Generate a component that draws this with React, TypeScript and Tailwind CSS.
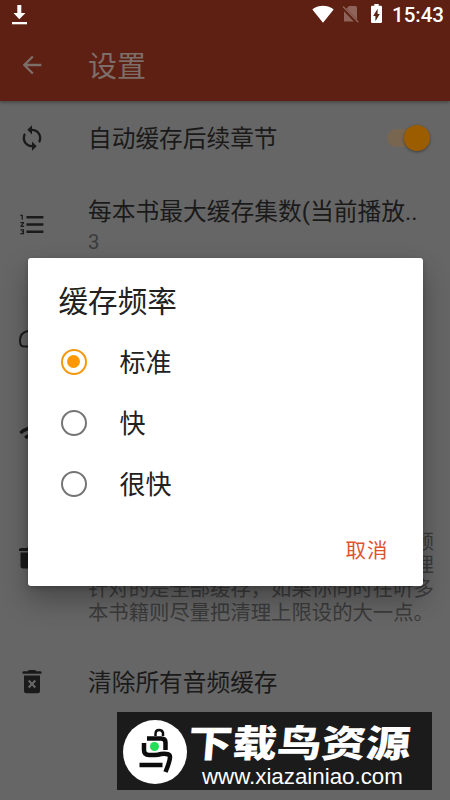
import type { ReactNode } from "react";
import { MdArrowBack, MdBatteryChargingFull, MdFormatListNumbered, MdSignalWifi4Bar, MdSync, MdWifi } from "react-icons/md";

const OPTIONS = [
  { id: "normal", label: "标准" },
  { id: "fast", label: "快" },
  { id: "faster", label: "很快" },
];

function StatusBar() {
  return (
    <div className="h-7 relative text-white">
      <svg className="absolute left-[11px] top-1" width="17" height="21" viewBox="0 0 17 21" fill="currentColor">
        <path d="M6.3 1h4v8h4.2l-6.2 6.3L2.5 9h3.8z" />
        <path d="M1 18h15v2.3H1z" />
      </svg>
      <MdSignalWifi4Bar className="absolute left-[312px] top-[3px] w-[22px] h-[22px]" />
      <svg className="absolute left-[342px] top-[5px] text-[#8e6359]" width="18" height="19" viewBox="0 0 18 19">
        <path d="M7 1h6.5q1.5 0 1.5 1.5V16.5H2V6z" fill="currentColor" />
        <path d="M0 1.8 15.5 17.8" stroke="#5d2012" strokeWidth="3.5" />
        <path d="M1 1.5 16.3 17.3" stroke="currentColor" strokeWidth="1.5" />
      </svg>
      <MdBatteryChargingFull className="absolute left-[365px] top-[2px] w-[23px] h-[23px] scale-x-115" />
      <span className="absolute left-[392px] top-[3px] text-[20.5px] leading-6 font-medium">15:43</span>
    </div>
  );
}

function CloudIcon() {
  return (
    <svg width="28" height="28" viewBox="0 0 28 28" fill="none" stroke="currentColor" strokeWidth="2">
      <path d="M22 22.5H5.500C3 22.500 2 19.500 2 16.500c0-5 3-8.500 8-9.500 2-2 3-3 4.500-3 4 0 6.500 3 7 7 3 .5 5 3 5 5.500 0 3.500-2.500 6-4.500 6z" />
    </svg>
  );
}

function TrashIcon() {
  return (
    <svg width="28" height="28" viewBox="0 0 28 28" fill="currentColor">
      <path d="M1 5.500Q1 4 3 4h6l1.500-1.500h7L19 4h6q2 0 2 1.500V7H1z" />
      <path d="M2.500 8.500h23V22q0 2.500-2.500 2.500H5Q2.500 24.500 2.500 22z" />
    </svg>
  );
}

function TrashCrossIcon() {
  return (
    <svg width="28" height="28" viewBox="0 0 28 28">
      <path d="M4.500 4.500q0-1.300 1.500-1.300h3.500L11 2h6l1.500 1.200H22q1.500 0 1.500 1.300v1.300h-19z" fill="currentColor" />
      <path d="M6 7.500h16V23q0 2.300-2.300 2.300H8.300Q6 25.300 6 23z" fill="currentColor" />
      <path d="m10.700 12.500 6.600 7M17.300 12.500l-6.600 7" stroke="#666" strokeWidth="2.200" />
    </svg>
  );
}

function Row({ icon, className, children }: { icon: ReactNode; className: string; children?: ReactNode }) {
  return (
    <div className={`flex items-center pl-[18px] text-[#1a1a1a] ${className}`}>
      <div className="w-[70px] shrink-0">{icon}</div>
      {children}
    </div>
  );
}

function Radio({ checked }: { checked: boolean }) {
  return (
    <span
      className={`w-[26px] h-[26px] rounded-full border-[2.5px] flex items-center justify-center shrink-0 ${
        checked ? "border-[#f5980f]" : "border-[#757575]"
      }`}
    >
      {checked && <span className="w-[13px] h-[13px] rounded-full bg-[#ff9800]" />}
    </span>
  );
}

function FrequencyDialog() {
  return (
    <div className="absolute left-[27.5px] top-[258px] w-[395px] h-[327.5px] bg-white rounded-[3px] shadow-[0_14px_28px_rgba(0,0,0,0.3),0_2px_5px_rgba(0,0,0,0.2)] text-[#212121]">
      <h2 className="pl-[31px] pt-[22px] text-[29.6px] leading-[44px]">缓存频率</h2>
      <ul className="mt-[7px]">
        {OPTIONS.map((o) => (
          <li key={o.id} className="h-[61px] flex items-center pl-[33px] gap-[33px]">
            <Radio checked={o.id === "normal"} />
            <span className="text-[26px] leading-[40px] pt-[3px]">{o.label}</span>
          </li>
        ))}
      </ul>
      <div className="flex justify-end pr-[34px] mt-[21px]">
        <button className="text-[20.5px] leading-[32px] tracking-[1px] text-[#e0532f]">取消</button>
      </div>
    </div>
  );
}

function Watermark() {
  return (
    <div className="absolute left-[117px] top-[712px] w-[315px] h-[78px] bg-[#1b1b1b] text-white flex items-center">
      <svg className="ml-[5px] mt-0.5 shrink-0" width="66" height="66" viewBox="0 0 66 66">
        <circle cx="33" cy="33" r="32" fill="#fff" />
        <g fill="none" stroke="#0c0c0c">
          <path d="M33.500 17v-2q0-4 3.500-4t4 3v3" strokeWidth="2.500" />
          <path d="M25 19.500h14q4.500 0 4.500 4V31" strokeWidth="4.500" />
          <path d="M22 24v7q0 5 5 5h6q3 0 6-1 9-1 9 3 0 4-4.500 15" strokeWidth="4.500" />
          <path d="M17.500 46h23" strokeWidth="4.500" />
        </g>
        <circle cx="32.500" cy="27.500" r="4.500" fill="#22dd55" />
      </svg>
      <div className="flex flex-col w-[230px] pt-[10px]">
        <div className="h-[40px] text-[44.5px] leading-[40px] font-black whitespace-nowrap origin-left scale-y-[0.84] -skew-x-4">
          下载鸟资源
        </div>
        <div className="pl-[14px] font-['Liberation_Sans'] text-[22.3px] leading-[25px] whitespace-nowrap">www.xiazainiao.com</div>
      </div>
    </div>
  );
}

export default function App() {
  return (
    <div className="relative w-[450px] h-[800px] overflow-hidden bg-[#666] font-[Roboto,'Noto_Sans_CJK_SC',sans-serif]">
      <header className="relative h-[101px] bg-[#5d2012] shadow-[0_1px_4px_rgba(0,0,0,0.4)]">
        <StatusBar />
        <div className="h-[74px] flex items-center pl-[18px] text-[#7d6e6a]">
          <MdArrowBack className="w-7 h-7" />
          <h1 className="ml-[42px] pt-[3px] text-[29px] leading-[44px]">设置</h1>
        </div>
      </header>

      <Row className="h-[74px]" icon={<MdSync className="w-7 h-7" />}>
        <span className="pt-[2px] text-[23.7px] leading-9">自动缓存后续章节</span>
        <span className="relative ml-auto mr-5 w-[43px] h-[26px] flex items-center">
          <span className="w-[38px] h-[18px] rounded-full bg-[#796650]" />
          <span className="absolute right-0 top-0 w-[26px] h-[26px] rounded-full bg-[#9c5d00] shadow-[0_1px_3px_rgba(0,0,0,0.4)]" />
        </span>
      </Row>
      <Row className="h-[98px]" icon={<MdFormatListNumbered className="w-[29px] h-[29px]" />}>
        <div className="pt-[2px]">
          <div className="text-[23.75px] leading-[34px] whitespace-nowrap">每本书最大缓存集数(当前播放..</div>
          <div className="text-[20.3px] leading-[26px] text-[#3b3b3b]">3</div>
        </div>
      </Row>
      <Row className="h-[130px]" icon={<CloudIcon />} />
      <Row className="h-[60px]" icon={<MdWifi className="w-[29px] h-[29px] mt-1" />} />
      <Row className="h-[190px]" icon={<TrashIcon />}>
        <p className="self-end mb-[27.5px] text-[20.35px] leading-[23.7px] text-[#3b3b3b] whitespace-nowrap">
          当缓存超过上限时会自动清理旧的音频
          <br />
          清理时优先删除最早的缓存，自动清理
          <br />
          针对的是全部缓存，如果你同时在听多
          <br />
          本书籍则尽量把清理上限设的大一点。
        </p>
      </Row>
      <Row className="h-[58px]" icon={<TrashCrossIcon />}>
        <span className="pt-[2px] text-[23.7px] leading-9">清除所有音频缓存</span>
      </Row>

      <FrequencyDialog />
      <Watermark />
    </div>
  );
}
